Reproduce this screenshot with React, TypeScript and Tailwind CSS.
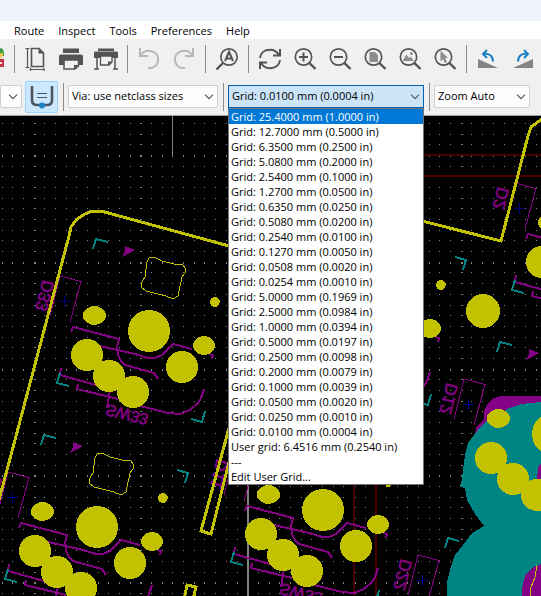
import React from "react";

const gridOptions = [
  "Grid: 25.4000 mm (1.0000 in)",
  "Grid: 12.7000 mm (0.5000 in)",
  "Grid: 6.3500 mm (0.2500 in)",
  "Grid: 5.0800 mm (0.2000 in)",
  "Grid: 2.5400 mm (0.1000 in)",
  "Grid: 1.2700 mm (0.0500 in)",
  "Grid: 0.6350 mm (0.0250 in)",
  "Grid: 0.5080 mm (0.0200 in)",
  "Grid: 0.2540 mm (0.0100 in)",
  "Grid: 0.1270 mm (0.0050 in)",
  "Grid: 0.0508 mm (0.0020 in)",
  "Grid: 0.0254 mm (0.0010 in)",
  "Grid: 5.0000 mm (0.1969 in)",
  "Grid: 2.5000 mm (0.0984 in)",
  "Grid: 1.0000 mm (0.0394 in)",
  "Grid: 0.5000 mm (0.0197 in)",
  "Grid: 0.2500 mm (0.0098 in)",
  "Grid: 0.2000 mm (0.0079 in)",
  "Grid: 0.1000 mm (0.0039 in)",
  "Grid: 0.0500 mm (0.0020 in)",
  "Grid: 0.0250 mm (0.0010 in)",
  "Grid: 0.0100 mm (0.0004 in)",
  "User grid: 6.4516 mm (0.2540 in)",
  "---",
  "Edit User Grid...",
];

const DARK = "#545454";

function Icon({ children }: { children: React.ReactNode }) {
  return (
    <svg width="24" height="24" viewBox="0 0 24 24" fill="none" aria-hidden="true">
      {children}
    </svg>
  );
}

function ToolButton({ label, children }: { label: string; children: React.ReactNode }) {
  return (
    <button type="button" aria-label={label} className="flex h-8 w-[35px] shrink-0 items-center justify-center">
      <Icon>{children}</Icon>
    </button>
  );
}

function Separator({ width = "w-2" }: { width?: string }) {
  return (
    <div className={`flex shrink-0 justify-center ${width}`}>
      <div className="h-7 w-px bg-[#8c8c8c]" />
    </div>
  );
}

function Lens({ children }: { children?: React.ReactNode }) {
  return (
    <>
      <circle cx="10.5" cy="10" r="8.2" stroke={DARK} strokeWidth="1.7" />
      <path d="M16.2 15.8 L22.6 22" stroke={DARK} strokeWidth="2.4" />
      {children}
    </>
  );
}

function Combo({
  label,
  value,
  width,
  open,
}: {
  label: string;
  value: string;
  width: string;
  open?: boolean;
}) {
  return (
    <div className={`relative shrink-0 ${width}`}>
      <select
        aria-label={label}
        className={`block h-[23px] w-full appearance-none border pl-[3px] text-[11px] text-black outline-none ${
          open ? "border-[#0560b0] bg-[#cce4f7]" : "rounded-[2px] border-[#cfcfcf] bg-[#fdfdfd]"
        }`}
      >
        <option>{value}</option>
      </select>
      <svg className="pointer-events-none absolute right-1 top-2 h-2 w-[10px]" viewBox="0 0 10 8" fill="none" aria-hidden="true">
        <path d="M1 1.7 L5 5.7 L9 1.7" stroke="#555" strokeWidth="1.1" />
      </svg>
      {open && (
        <ul
          role="listbox"
          aria-label="Grid sizes"
          className="absolute left-0 top-[23px] z-10 w-full border border-[#777] bg-white text-[11px] leading-[15px] text-black"
        >
          {gridOptions.map((text, i) => (
            <li
              key={i}
              role="option"
              aria-selected={i === 0}
              className={`h-[15px] whitespace-nowrap pl-0.5 ${i === 0 ? "bg-[#0078d7] text-white" : ""}`}
            >
              {text}
            </li>
          ))}
        </ul>
      )}
    </div>
  );
}

/* Grid dots: every tenth row and column is drawn one pixel heavier. */
function gridPath() {
  const pitch = 10.68;
  let d = "";
  for (let r = -3; r < 70; r++) {
    const y = Math.round(155 + r * pitch);
    const h = r % 10 === 0 ? 2 : 1;
    for (let c = -3; c < 110; c++) {
      const x = Math.round(33.6 + c * pitch);
      const w = c % 10 === 0 ? 2 : 1;
      d += `M${x} ${y}h${w}v${h}h-${w}z`;
    }
  }
  return d;
}
const dots = gridPath();

const parts = [
  { x: 0, y: 0, name: "D33" },
  { x: -52, y: 196, name: "D31" },
  { x: 174, y: 179, name: "D11" },
  { x: 226, y: -17, name: "D13" },
  { x: 455, y: -93, name: "D2" },
  { x: 404, y: 103, name: "D12" },
];

function Diode({ name }: { name: string }) {
  return (
    <g stroke="#840084" fill="none">
      <path d="M50 316 L60 276 L81 281.500 L70 322" />
      <path d="M64.500 296 v11 M59 301.500 h11" stroke="#000084" />
      <text
        transform="matrix(-0.24 0.97 0.97 0.24 54 282)"
        fontSize="17"
        fill="#840084"
        strokeWidth="0.6"
        className="font-['Liberation_Sans',sans-serif]"
      >
        {name}
      </text>
    </g>
  );
}

function Silk({ name }: { name: string }) {
  return (
    <>
      <g stroke="#840084" strokeWidth="2" fill="none">
        <path d="M71 332 L73 327 L119 339 L117 347 L118 355 L121 361 L125 365 L154 373 L158 379" />
        <path d="M100 346 L135 354 L148 358 L155 358 L162 355 L168 349 L173 344 L192 349" />
        <path d="M209 354 L213 355 L212 359" />
        <path d="M61 368 L60 375 L96 385 M78 384 L77 389 L118 399 M110 390 L107 408" />
        <path d="M140 406 L168 413 L180 414 L190 410 L198 403 L201 398 L204 389" />
      </g>
      <Diode name={name} />
      <text
        transform="matrix(0.97 0.24 0.24 -0.97 107 404)"
        fontSize="16"
        fill="#840084"
        stroke="#840084"
        strokeWidth="0.6"
        className="font-['Liberation_Sans',sans-serif]"
      >
        SW33
      </text>
      <path d="M125 246 L135 250 L128 254 L122 257 L125 251 Z" fill="#840084" />
      <g stroke="#008484" strokeWidth="2" fill="none">
        <path d="M93 249 L96 239 L108 242" />
        <path d="M229 274 L240 277 L237 287" />
        <path d="M60 373 L57 383 L69 386" />
        <path d="M191 419 L202 422 L205 411" />
      </g>
    </>
  );
}

function Pads() {
  return (
    <>
      <g fill="#c2c200">
        <circle cx="149" cy="331" r="21" />
        <circle cx="87" cy="355" r="16" />
        <circle cx="109" cy="376" r="16" />
        <circle cx="133" cy="392" r="16" />
        <circle cx="182" cy="367" r="16" />
        <ellipse cx="94.400" cy="315.500" rx="11.500" ry="9.500" />
        <ellipse cx="204" cy="345.500" rx="11" ry="9.500" />
        <circle cx="214.800" cy="302" r="5" />
      </g>
      <path
        d="M147 262 L149 258 L154 257 L162 261 L174 264 L183 265 L186 269 L185 273 L182 277 L178 296 L173 299 L166 296 L146 291 L141 287 L142 282 L145 277 Z"
        fill="none"
        stroke="#c2c200"
      />
    </>
  );
}

function Board() {
  return (
    <svg className="h-0 min-h-[480px] w-full flex-1 bg-black" shapeRendering="crispEdges" role="img" aria-label="Board layout">
      <g transform="translate(0 -116)">
        <path d={dots} fill="#848484" />
        <path d="M424 155 H1200 M424 176 H1200 M354 484 V1200 M376 484 V1200" stroke="#480000" strokeWidth="2" />
        <path d="M172.500 116 V156" stroke="#848484" />
        <path d="M248 484 V1200" stroke="#848484" strokeWidth="2" />
        {parts.map((p) => (
          <g key={p.name} transform={`translate(${p.x} ${p.y})`}>
            <Silk name={p.name} />
          </g>
        ))}
        <g transform="translate(358 279)">
          <Diode name="D22" />
        </g>
        <path d="M445 548 L448 538 L459 541" stroke="#008484" strokeWidth="2" fill="none" />
        <path d="M476 440 L476 427 L484 420 L484 411 L488 403 L494 398 L501 396 H640 V440 Z" fill="#840084" />
        <path
          d="M640 402 H541 L521 404 L509 408 L499 415 L489 418 L477 431 L468 443 L465 455 L463 470 L461 486 L465 488 L467 500 L475 514 L484 526 L472 533 L463 545 L455 555 L450 570 L447 582 L447 620 H640 Z"
          fill="#008484"
        />
        <path d="M560 456 L541 463 L538 468 L537 480 H560 Z" fill="#840084" />
        <path d="M560 560 L541 564 L532 568 L525 576 L522 588 V620 H560 Z" fill="#840084" />
        <path d="M537 565 L535 577 L531 587 L530 600" stroke="#c2c200" fill="none" />
        <g stroke="#c2c200" strokeWidth="3" fill="none">
          <path d="M-4 512 L0 496 L15 440 L60 270 L69 236 L71 227 L77 219 L85 214 L92 211 L101 211 L229 246" />
          <path d="M422 221 L501 241 L528 136 L531 127 L542 119" />
          <path d="M229 428 L201 531 L211 534 L229 462" />
          <path d="M184 600 L187 585 L196 587 L193 600" />
          <path d="M386 485 H390" />
        </g>
        {parts.map((p) => (
          <g key={p.name} transform={`translate(${p.x} ${p.y})`}>
            <Pads />
          </g>
        ))}
        <circle cx="483" cy="311" r="17" fill="#c2c200" />
      </g>
    </svg>
  );
}

function MainToolbar() {
  return (
    <div role="toolbar" aria-label="Main" className="flex h-[41px] items-center overflow-hidden bg-[#f0f0f0] pb-0.5">
      <button type="button" aria-label="Board setup" className="h-8 w-[10px] shrink-0 overflow-hidden">
        <svg width="4" height="24" viewBox="0 0 4 24" aria-hidden="true">
          <path d="M0 1 L3 2 L4 6 V10 H0 Z" fill="#3d9b46" />
          <path d="M0 6 H3 V11 H0 Z" fill="#f2c14b" />
          <path d="M0 12 H4 V20 H0 Z" fill="#c8324a" />
          <path d="M1 9 H4 V12 H1 Z M0 15 H2 V17 H0 Z" fill="#efe3d0" />
        </svg>
      </button>
      <Separator />
      <ToolButton label="Page settings">
        <path d="M7.500 1.500 H15 L19.500 6 V19.500 H7.500 Z" stroke={DARK} strokeWidth="1.600" />
        <path d="M14.500 1 V6.500 H20 Z" fill={DARK} />
        <path d="M3.500 1.500 V20.500 M1.500 1.500 H5.500 M1.500 20.500 H5.500 M7 22.500 H20 M6.500 21 V24 M20 21 V24" stroke={DARK} strokeWidth="1.200" />
      </ToolButton>
      <ToolButton label="Print">
        <path d="M4 1.500 H20 V6 H4 Z M2 7.500 H22 Q24 7.500 24 9.500 V18 H0 V9.500 Q0 7.500 2 7.500 Z" fill={DARK} />
        <path d="M5 13 H19.500 V19 L16 22 H5 Z" fill="#f0f0f0" stroke={DARK} strokeWidth="1.500" />
        <path d="M15 22.500 V18 H20 Z" fill={DARK} />
      </ToolButton>
      <ToolButton label="Plot">
        <path d="M4 1.500 H20 V4 H4 Z M1 4.500 H23 Q24 4.500 24 6 V11 H0 V6 Q0 4.500 1 4.500 Z" fill={DARK} />
        <path d="M3 11 V22 M21 11 V22 M0 22 H5 M19 22 H24" stroke={DARK} strokeWidth="1.500" />
        <path d="M6.500 9 H18 V15 L15 18 H6.500 Z" fill="#f0f0f0" stroke={DARK} strokeWidth="1.300" />
        <path d="M14 18.500 V14.500 H18.500 Z" fill={DARK} />
      </ToolButton>
      <Separator />
      <ToolButton label="Undo">
        <path d="M3 1 V9 H11 M3.500 8.500 C6 4.500 10 3 14 4 C19 5.200 22 9 21 14 C20 19 16 21.500 11 21" stroke="#b8b8b8" strokeWidth="2" />
      </ToolButton>
      <ToolButton label="Redo">
        <path d="M21 1 V9 H13 M20.500 8.500 C18 4.500 14 3 10 4 C5 5.200 2 9 3 14 C4 19 8 21.500 13 21" stroke="#b8b8b8" strokeWidth="2" />
      </ToolButton>
      <Separator />
      <ToolButton label="Find">
        <circle cx="14" cy="10" r="8.200" stroke={DARK} strokeWidth="1.700" />
        <path d="M8 16 L1.500 22.500" stroke={DARK} strokeWidth="2.400" />
        <path d="M10 14 L14 4.800 L18 14 M11.500 11.500 H16.500" stroke={DARK} strokeWidth="2" />
      </ToolButton>
      <Separator />
      <ToolButton label="Refresh">
        <path d="M2 11 C2.500 6 6.500 2.800 12 2.800 C16 2.800 19 4.500 21 8 M22 2 V8.500 H15" stroke={DARK} strokeWidth="2" />
        <path d="M22 13 C21.500 18 17.500 21.200 12 21.200 C8 21.200 5 19.500 3 16 M2 22 V15.500 H9" stroke={DARK} strokeWidth="2" />
      </ToolButton>
      <ToolButton label="Zoom in">
        <Lens>
          <path d="M10.500 5.500 V14.500 M6 10 H15" stroke={DARK} strokeWidth="2" />
        </Lens>
      </ToolButton>
      <ToolButton label="Zoom out">
        <Lens>
          <path d="M6 10 H15" stroke={DARK} strokeWidth="2" />
        </Lens>
      </ToolButton>
      <ToolButton label="Zoom to fit page">
        <Lens>
          <path d="M6.500 5 H12 L15 8 V15 H6.500 Z" fill="#8c8c8c" />
        </Lens>
      </ToolButton>
      <ToolButton label="Zoom to objects">
        <Lens>
          <path d="M4.500 14 L8.500 7.500 L11 11 L12.500 9.500 L16 14 Z" fill="#8c8c8c" />
          <circle cx="13.500" cy="6.500" r="1.500" fill="#8c8c8c" />
        </Lens>
      </ToolButton>
      <ToolButton label="Zoom to selection">
        <Lens>
          <path d="M7.500 3.500 V14.500 L10 12.200 L12 16 L14 15 L12 11.300 L15 11 Z" fill="#8c8c8c" />
        </Lens>
      </ToolButton>
      <Separator />
      <ToolButton label="Rotate counterclockwise">
        <path d="M2 12 V21 H22 Z" fill="#848484" />
        <path d="M7.500 7 C13 6 17 9 17 14.500" stroke="#1a81c4" strokeWidth="2" />
        <path d="M11 3 L7 7 L11 11" stroke="#1a81c4" strokeWidth="2" />
      </ToolButton>
      <ToolButton label="Rotate clockwise">
        <path d="M22 12 V21 H2 Z" fill="#848484" />
        <path d="M16.500 7 C11 6 7 9 7 14.500" stroke="#1a81c4" strokeWidth="2" />
        <path d="M13 3 L17 7 L13 11" stroke="#1a81c4" strokeWidth="2" />
      </ToolButton>
    </div>
  );
}

function OptionsToolbar() {
  return (
    <div role="toolbar" aria-label="Options" className="flex h-9 items-center border-b border-[#a0a0a0] bg-[#f0f0f0] pb-0.5">
      <Combo label="Track width" value="" width="w-[22px]" />
      <button
        type="button"
        aria-label="Use existing track width"
        aria-pressed="true"
        className="ml-[3px] flex h-8 w-[33px] shrink-0 items-center justify-center rounded-[2px] border border-[#99d1ff] bg-[#cce8ff]"
      >
        <Icon>
          <path d="M2 1 V15 Q2 20 7 20 H17 Q22 20 22 15 V1" stroke="#4c5560" strokeWidth="2.600" />
          <path d="M7 8.500 H17 M7 12.500 H17" stroke="#4c5560" strokeWidth="1.200" />
          <circle cx="12" cy="20.500" r="3" fill="#1a81c4" />
        </Icon>
      </button>
      <Separator width="w-[10px]" />
      <Combo label="Via size" value="Via: use netclass sizes" width="w-[150px]" />
      <Separator width="w-[10px]" />
      <Combo label="Grid" value="Grid: 0.0100 mm (0.0004 in)" width="w-[196px]" open />
      <Separator width="w-[10px]" />
      <Combo label="Zoom" value="Zoom Auto" width="w-[96px]" />
    </div>
  );
}

export default function App() {
  return (
    <div className="flex min-h-screen flex-col overflow-hidden bg-black font-['Open_Sans','Noto_Sans',sans-serif] text-[11px] text-black">
      <div className="h-[21px] bg-[#eef3fb]" />
      <nav aria-label="Menu" className="flex h-[18px] items-center gap-[14px] bg-white pl-[14px] pt-0.5">
        {["Route", "Inspect", "Tools", "Preferences", "Help"].map((m) => (
          <button key={m} type="button" className="leading-4">
            {m}
          </button>
        ))}
      </nav>
      <MainToolbar />
      <OptionsToolbar />
      <Board />
    </div>
  );
}
